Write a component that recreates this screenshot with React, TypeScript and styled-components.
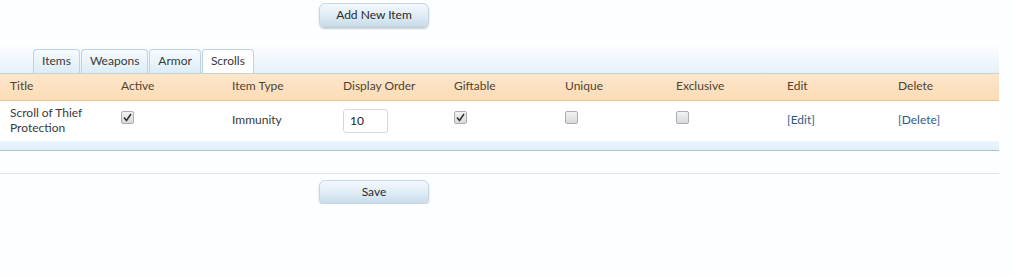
import React from "react";
import styled, { createGlobalStyle } from "styled-components";

const Global = createGlobalStyle`
  html, body { margin: 0; padding: 0; background: #fdfeff; }
  body { font-family: Lato, "Liberation Sans", sans-serif; font-size: 12px; color: #3a3a3a; }
`;

const Page = styled.div`
  width: 999px;
  display: flex;
  flex-direction: column;
`;

const ButtonRow = styled.div<{ $top: number; $bottom: number }>`
  display: flex;
  padding: ${(p) => p.$top}px 0 ${(p) => p.$bottom}px 319px;
`;

const Button = styled.button`
  width: 110px;
  height: 24px;
  border: 1px solid #c3d6e4;
  border-radius: 6px;
  background: linear-gradient(#f3f8fc 0%, #e1edf6 50%, #c9dcea 100%);
  box-shadow: 0 2px 2px rgba(120, 140, 160, 0.45);
  font-family: Lato, "Liberation Sans", sans-serif;
  font-size: 12px;
  color: #2a2a2a;
  padding: 0 0 2px;
  cursor: pointer;
`;

const TabStrip = styled.div`
  height: 33px;
  display: flex;
  align-items: flex-end;
  padding-left: 33px;
  background: linear-gradient(#ffffff 0%, #f4f9fd 50%, #e5f1f9 100%);
  gap: 1px;
`;

const Tab = styled.div<{ $active?: boolean }>`
  height: 24px;
  padding: 0 8px 2px;
  box-sizing: border-box;
  display: flex;
  align-items: center;
  border: 1px solid #bdd3df;
  border-bottom: none;
  border-radius: 4px 4px 0 0;
  background: ${(p) => (p.$active ? "#ffffff" : "linear-gradient(#f7fbfe, #dcecf6)")};
  color: #3a3a3a;
  font-size: 12px;
`;

const Grid = styled.div`
  display: grid;
  grid-template-columns: repeat(9, 111px);
`;

const HeaderRow = styled(Grid)`
  height: 26px;
  box-sizing: content-box;
  padding-bottom: 0;
  border-top: 1px solid #c4d3da;
  border-bottom: 1px solid #efc58f;
  background: linear-gradient(#fde6cb, #fbdcb6);
  align-items: center;
`;

const HeadCell = styled.div`
  padding: 0 0 4px 10px;
  color: #514333;
`;

const BodyRow = styled(Grid)`
  height: 40px;
  box-sizing: border-box;
  padding-bottom: 3px;
  align-items: center;
  background: #ffffff;
`;

const Cell = styled.div`
  padding-left: 10px;
  line-height: 15px;
  color: #3a3a3a;
  display: flex;
  align-items: center;
`;

const Link = styled.a`
  color: #2e5a86;
  text-decoration: none;
`;

const NumberInput = styled.input`
  width: 45px;
  height: 24px;
  box-sizing: border-box;
  border: 1px solid #d4d9dd;
  border-radius: 3px;
  padding: 0 6px;
  margin-top: 2px;
  font-family: Lato, "Liberation Sans", sans-serif;
  font-size: 12px;
  color: #222;
  background: #fff;
`;

const Box = styled.span`
  width: 11px;
  height: 11px;
  border: 1px solid #a8aeb3;
  border-radius: 2px;
  background: linear-gradient(#f2f2f2, #d8dadc);
  display: inline-flex;
  align-items: center;
  justify-content: center;
  margin-top: -5px;
`;

const Band = styled.div`
  height: 9px;
  background: linear-gradient(#eaf5fc, #dfeff9);
  border-bottom: 1px solid #a9c4c9;
`;

const Divider = styled.div`
  margin-top: 22px;
  height: 1px;
  background: #e2e4e6;
`;

const Check = ({ on }: { on?: boolean }) => (
  <Box>
    {on && (
      <svg width="9" height="9" viewBox="0 0 9 9">
        <path d="M1 4.5 L3.5 7.5 L8 1" fill="none" stroke="#333" strokeWidth="1.6" />
      </svg>
    )}
  </Box>
);

const headers = ["Title", "Active", "Item Type", "Display Order", "Giftable", "Unique", "Exclusive", "Edit", "Delete"];

export default function App() {
  return (
    <Page>
      <Global />
      <ButtonRow $top={3} $bottom={13}>
        <Button>Add New Item</Button>
      </ButtonRow>
      <TabStrip>
        <Tab>Items</Tab>
        <Tab>Weapons</Tab>
        <Tab>Armor</Tab>
        <Tab $active>Scrolls</Tab>
      </TabStrip>
      <HeaderRow>
        {headers.map((h) => (
          <HeadCell key={h}>{h}</HeadCell>
        ))}
      </HeaderRow>
      <BodyRow>
        <Cell>Scroll of Thief<br />Protection</Cell>
        <Cell><Check on /></Cell>
        <Cell>Immunity</Cell>
        <Cell><NumberInput defaultValue="10" /></Cell>
        <Cell><Check on /></Cell>
        <Cell><Check /></Cell>
        <Cell><Check /></Cell>
        <Cell><Link href="#">[Edit]</Link></Cell>
        <Cell><Link href="#">[Delete]</Link></Cell>
      </BodyRow>
      <Band />
      <Divider />
      <ButtonRow $top={6} $bottom={0}>
        <Button>Save</Button>
      </ButtonRow>
    </Page>
  );
}
